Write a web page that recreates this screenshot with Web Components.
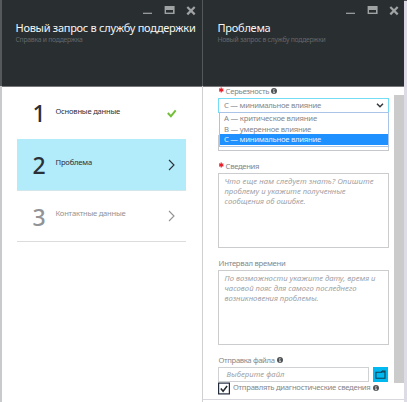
<!DOCTYPE html>
<html lang="ru">
<head>
<meta charset="utf-8">
<title>Новый запрос в службу поддержки</title>
<style>
html,body{margin:0;height:100%;overflow:hidden;background:#fff}
body{font-family:"Noto Sans","Open Sans",sans-serif}
</style>
</head>
<body>
<support-app></support-app>
<script>
const define = (name, html, setup) => {
  const tpl = document.createElement('template');
  tpl.innerHTML = html;
  customElements.define(name, class extends HTMLElement {
    connectedCallback() {
      if (this.shadowRoot) return;
      this.attachShadow({mode: 'open'}).append(tpl.content.cloneNode(true));
      if (setup) setup(this, this.shadowRoot);
    }
  });
};

// One line of text whose tracking is adjusted to fill the width given in "w".
define('fit-text', `
<style>:host{display:block;white-space:nowrap;line-height:inherit;flex:none}span{display:inline-block}</style>
<span><slot></slot></span>`, (el, root) => {
  const span = root.querySelector('span');
  const w = parseFloat(el.getAttribute('w'));
  const n = el.textContent.length;
  el.style.width = w + 'px';
  span.style.letterSpacing = ((w - span.getBoundingClientRect().width) / n) + 'px';
});

define('window-controls', `
<style>:host{display:flex;justify-content:flex-end;height:21px}svg{display:block}</style>
<svg width="56" height="21" viewBox="0 0 56 21">
<path d="M1 13.3h9" stroke="#a3a5a6" stroke-width="1.2"/>
<path d="M22.6 6h10v8h-10z" fill="#a0a3a4"/><path d="M24 10h7v2.6h-7z" fill="#292e31"/>
<path d="M45.3 7l7.4 7.4m0-7.4l-7.4 7.4" stroke="#a0a3a4" stroke-width="2.2"/>
</svg>`);

define('blade-header', `
<style>
:host{display:block;box-sizing:border-box;height:87px;background:#292e31;border-bottom:1px solid #77777a;color:#f4f5f5;padding:0 var(--right,4px) 0 var(--left,13px)}
.t{font-size:11px;line-height:14px;height:14px}
.s{font-size:6.8px;line-height:9px;color:#636769}
</style>
<window-controls></window-controls>
<div class="t"><slot name="title"></slot></div>
<div class="s"><slot name="sub"></slot></div>`);

define('step-item', `
<style>
:host{display:flex;box-sizing:border-box;height:51px;align-items:flex-start;color:#2b3037;border-bottom:1px solid transparent}
:host([active]){background:#b2ebfa;border-bottom-color:#d3e6e9}
:host([muted]){color:#919396;border-bottom:1px solid #dcdcdc}
.n{width:23px;padding-left:15.5px;font-size:23px;line-height:26px;padding-top:13px;font-weight:500}
.l{font-size:7.6px;line-height:10px;padding-top:18px;flex:1}
:host([done]) .l{padding-top:19px}:host([muted]) .l{padding-top:17px}
svg{display:block;margin:19px 9px 0 0}
:host([muted]) svg{margin-top:18px}
.check{display:none}
:host([done]) .check{display:block}:host([done]) .chev{display:none}
</style>
<div class="n"><slot name="n"></slot></div><div class="l"><slot></slot></div>
<svg class="chev" width="10" height="14" viewBox="0 0 10 14"><path d="M2 2l5 5-5 5" fill="none" stroke="currentColor" stroke-width="1.1"/></svg>
<svg class="check" width="10" height="14" viewBox="0 0 10 14"><path d="M.8 7l3.1 3.2L8.7 4.3" fill="none" stroke="#72bf37" stroke-width="1.9"/></svg>`);

define('info-icon', `
<style>:host{display:block;flex:none}svg{display:block}</style>
<svg width="6" height="6" viewBox="0 0 6 6"><circle cx="3" cy="3" r="3" fill="#505356"/><path d="M3 1v1M2.3 2.7H3v2M2.2 4.7h1.7" stroke="#fff" stroke-width=".7" fill="none"/></svg>`);

define('field-label', `
<style>
:host{display:flex;align-items:center;height:10px;font-size:7.7px;line-height:10px;color:#85878a;gap:2px;padding-left:.6px}
.star{display:none;width:5px;height:10px}
.star svg{display:block}
:host([required]) .star{display:block}
</style>
<span class="star"><svg width="5" height="10" viewBox="0 0 5 10"><path d="M2.2 1.4v5M0 2.7l4.4 2.4M4.4 2.7L0 5.1" stroke="#ea1c27" stroke-width="1.2"/></svg></span><slot></slot>`);

define('severity-select', `
<style>
:host{display:block;position:relative;height:53px;font-size:7.7px;color:#85878a}
.next{position:absolute;box-sizing:border-box;left:0;right:0;top:37px;height:16px;border:1px solid #c6c8cb}
.head{display:flex;box-sizing:border-box;height:15px;border:1px solid #74dcf5;align-items:center;justify-content:space-between;padding:0 4px 0 5px;line-height:13px;background:#fff;position:relative}
.menu{position:absolute;box-sizing:border-box;left:1px;right:0;top:14px;height:35px;border:1px solid #a9c4e6;background:#fff}
.menu div{height:10.5px;line-height:10px;padding-left:4px}
.menu .sel{background:#1e90ff;color:#e2f1ff;height:11px}
svg{display:block}
</style>
<div class="next"></div>
<div class="head"><fit-text w="97">C — минимальное влияние</fit-text>
<svg width="8" height="7" viewBox="0 0 8 7"><path d="M1 1.7l3 3 3-3" fill="none" stroke="#34383b" stroke-width="1.5"/></svg></div>
<div class="menu"><div><fit-text w="93">A — критическое влияние</fit-text></div><div><fit-text w="87">B — умеренное влияние</fit-text></div><div class="sel"><fit-text w="97">C — минимальное влияние</fit-text></div></div>`);

define('text-box', `
<style>:host{display:block;box-sizing:border-box;height:75px;border:1px solid #cacccd;padding:1.5px 5.5px;font-size:7.7px;line-height:var(--lh,10px);font-style:italic;color:#a0a2a5}</style>
<slot></slot>`);

define('file-picker', `
<style>
:host{display:flex;gap:4px;height:15px}
.in{box-sizing:border-box;width:151px;height:15px;border:1px solid #cfd1d2;padding-left:7.5px;font-size:7.7px;line-height:12.5px;font-style:italic;color:#a0a2a5}
.b{width:15px;height:15px;background:#00b9f1}svg{display:block}
</style>
<div class="in"><fit-text w="58">Выберите файл</fit-text></div>
<div class="b"><svg width="15" height="15" viewBox="0 0 15 15"><path d="M2.9 5.2h5.4l1-1.2h2.7v7.2H2.9z" fill="none" stroke="#163e50" stroke-width="1.1"/><path d="M8 4.9h4" stroke="#163e50" stroke-width="1.2"/></svg></div>`);

define('check-row', `
<style>:host{display:flex;height:13px;gap:3px;font-size:7.7px;line-height:10px;color:#85878a}
svg{display:block}info-icon{margin:3px 0 0 -1px}</style>
<svg width="12" height="13" viewBox="0 0 12 13"><rect x=".6" y="1.1" width="10.8" height="10.8" fill="#fff" stroke="#222b3b" stroke-width="1.2"/><path d="M2.8 6.5l2.3 2.8 4-5.3" fill="none" stroke="#23282c" stroke-width="1.5"/></svg>
<fit-text w="137.5">Отправлять диагностические сведения</fit-text><info-icon></info-icon>`);

define('support-app', `
<style>
:host{display:grid;grid-template-columns:2px 200px 1px 201px 3px;width:407px;height:402px;overflow:hidden;background:#fff}
.edge{background:linear-gradient(#55595c 0 86px,#c9cacb 86px)}
.split{background:linear-gradient(#54585a 0 86px,#d0d0d2 86px)}
.out{background:linear-gradient(#55555c 0 1px,#dddce6 1px)}
.steps{padding:0 16px 0 15px}
.steps step-item[done],.steps step-item[active]{height:52px}
.body{display:flex;height:312px}
form{display:block;width:171px;padding:0 5px 0 15px;flex:none}
.scroll{width:10px;height:288px;margin-top:8px;background:#cbcbcb}
.foot{border-top:1px solid #d8d8de}
.right{height:402px;overflow:hidden}
</style>
<div class="edge"></div>
<section>
<blade-header style="--left:13.5px;--right:4px"><fit-text slot="title" w="180">Новый запрос в службу поддержки</fit-text><fit-text slot="sub" w="67">Справка и поддержка</fit-text></blade-header>
<div class="steps">
<step-item done><span slot="n">1</span><fit-text w="64.5">Основные данные</fit-text></step-item>
<step-item active><span slot="n">2</span><fit-text w="36.5">Проблема</fit-text></step-item>
<step-item muted><span slot="n">3</span><fit-text w="70">Контактные данные</fit-text></step-item>
</div>
</section>
<div class="split"></div>
<section class="right">
<blade-header style="--left:14.5px;--right:3px"><fit-text slot="title" w="53">Проблема</fit-text><fit-text slot="sub" w="108">Новый запрос в службу поддержки</fit-text></blade-header>
<div class="body">
<form>
<field-label required style="height:8px;margin-bottom:3px"><fit-text w="43.5">Серьезность</fit-text><info-icon></info-icon></field-label>
<severity-select></severity-select>
<field-label required style="margin:10px 0 2px"><fit-text w="33.5">Сведения</fit-text></field-label>
<text-box><fit-text w="149">Что еще нам следует знать? Опишите</fit-text><fit-text w="121">проблему и укажите полученные</fit-text><fit-text w="81">сообщения об ошибке.</fit-text></text-box>
<field-label style="margin:10px 0 2px"><fit-text w="67">Интервал времени</fit-text></field-label>
<text-box style="--lh:10.4px"><fit-text w="151">По возможности укажите дату, время и</fit-text><fit-text w="132">часовой пояс для самого последнего</fit-text><fit-text w="94">возникновения проблемы.</fit-text></text-box>
<field-label style="margin:10px 0 2px"><fit-text w="56">Отправка файла</fit-text><info-icon></info-icon></field-label>
<file-picker></file-picker>
<check-row></check-row>
</form>
<div class="scroll"></div>
</div>
<div class="foot"></div>
</section>
<div class="out"></div>`);
</script>
</body>
</html>
